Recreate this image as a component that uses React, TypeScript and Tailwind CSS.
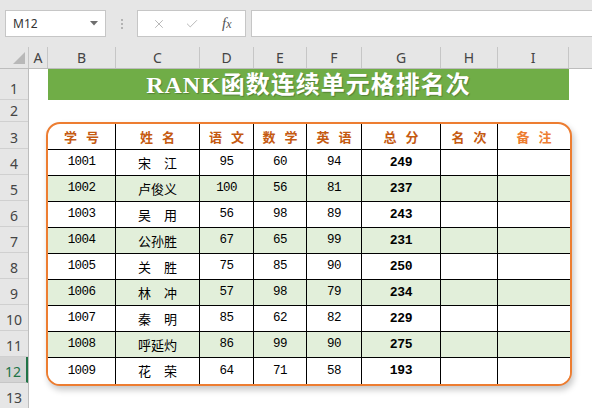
import { X, Check } from 'lucide-react'

const cols = [
  { key: 'A', w: 'w-[19px]' },
  { key: 'B', w: 'w-[68px]' },
  { key: 'C', w: 'w-[84px]' },
  { key: 'D', w: 'w-[54px]' },
  { key: 'E', w: 'w-[53px]' },
  { key: 'F', w: 'w-[55px]' },
  { key: 'G', w: 'w-[79px]' },
  { key: 'H', w: 'w-[57px]' },
  { key: 'I', w: 'w-[71px]' },
]

const rowHeads = [
  { n: 1, h: 'h-[31px]' },
  { n: 2, h: 'h-[22px]' },
  { n: 3, h: 'h-[27px]' },
  { n: 4, h: 'h-[26px]' },
  { n: 5, h: 'h-[26px]' },
  { n: 6, h: 'h-[26px]' },
  { n: 7, h: 'h-[26px]' },
  { n: 8, h: 'h-[26px]' },
  { n: 9, h: 'h-[26px]' },
  { n: 10, h: 'h-[26px]' },
  { n: 11, h: 'h-[26px]' },
  { n: 12, h: 'h-[26px]' },
  { n: 13, h: 'h-[26px]' },
]

const headers = [
  ['学', '号'],
  ['姓', '名'],
  ['语', '文'],
  ['数', '学'],
  ['英', '语'],
  ['总', '分'],
  ['名', '次'],
  ['备', '注'],
]

const students = [
  ['1001', '宋　江', 95, 60, 94, 249],
  ['1002', '卢俊义', 100, 56, 81, 237],
  ['1003', '吴　用', 56, 98, 89, 243],
  ['1004', '公孙胜', 67, 65, 99, 231],
  ['1005', '关　胜', 75, 85, 90, 250],
  ['1006', '林　冲', 57, 98, 79, 234],
  ['1007', '秦　明', 85, 62, 82, 229],
  ['1008', '呼延灼', 86, 99, 90, 275],
  ['1009', '花　荣', 64, 71, 58, 193],
]

const cell = 'flex items-center justify-center border-r border-black'
const num = "font-['Liberation_Mono',monospace] text-[12.5px] tracking-[-0.6px] text-black"
const cjk = "font-['Noto_Sans_CJK_SC',sans-serif]"

function Toolbar() {
  return (
    <div className="flex h-[47px] items-start bg-[#e6e6e6] pt-[10px] pl-[5px]">
      <div className="flex h-[27px] w-[101px] items-center justify-between border border-[#c6c6c6] bg-white pl-[7px] pr-[7px]">
        <span className="font-['Noto_Sans',sans-serif] text-[12px] text-[#333]">M12</span>
        <svg width="8" height="5" viewBox="0 0 8 5">
          <path d="M0 0 L8 0 L4 4.5 Z" fill="#6e6e6e" />
        </svg>
      </div>
      <div className="flex h-[27px] w-[31px] flex-col items-center justify-center gap-[2px]">
        <span className="h-[2px] w-[2px] bg-[#b3b3b3]" />
        <span className="h-[2px] w-[2px] bg-[#b3b3b3]" />
        <span className="h-[2px] w-[2px] bg-[#b3b3b3]" />
      </div>
      <div className="flex h-[27px] w-[109px] items-center border border-[#c6c6c6] bg-white">
        <X className="ml-[14px] h-[14px] w-[14px] text-[#a8a8a8]" strokeWidth={1.4} />
        <Check className="ml-[19px] h-[14px] w-[14px] text-[#a8a8a8]" strokeWidth={1.4} />
        <span className="ml-[23px] font-['Liberation_Serif',serif] text-[15px] italic text-[#555]">
          f<span className="text-[12px]">x</span>
        </span>
      </div>
      <div className="ml-[5px] h-[27px] flex-1 border border-r-0 border-[#c6c6c6] bg-white" />
    </div>
  )
}

function ColumnHeader() {
  return (
    <div className="flex h-[22px] border-b border-[#bdbdbd] bg-[#e6e6e6] font-['Noto_Sans',sans-serif] text-[14px] text-[#444]">
      <div className="flex w-[29px] items-end justify-end border-r border-[#c6c6c6] pb-[4px] pr-[3px]">
        <svg width="12" height="12" viewBox="0 0 12 12">
          <path d="M12 0 L12 12 L0 12 Z" fill="#b8b8b8" />
        </svg>
      </div>
      {cols.map((c) => (
        <div
          key={c.key}
          className={`${c.w} flex items-center justify-center border-r border-[#c6c6c6] leading-none`}
        >
          {c.key}
        </div>
      ))}
      <div className="flex-1" />
    </div>
  )
}

function RowHeaders() {
  return (
    <div className="flex w-[29px] flex-col border-r border-[#bdbdbd] bg-[#e6e6e6] font-['Noto_Sans',sans-serif] text-[14px]">
      {rowHeads.map((r) => (
        <div
          key={r.n}
          className={
            r.n === 12
              ? `${r.h} flex shrink-0 items-end justify-center border-b border-[#c6c6c6] border-r-2 border-r-[#217346] bg-[#d4d4d4] pb-[1px] leading-none text-[#217346]`
              : `${r.h} flex shrink-0 items-end justify-center border-b border-[#d0d0d0] pb-[1px] leading-none text-[#444]`
          }
        >
          <span className="pb-[2px]">{r.n}</span>
        </div>
      ))}
    </div>
  )
}

function ScoreTable() {
  return (
    <div className="ml-[17px] mt-[22px] w-[526px] overflow-hidden rounded-[14px] border-2 border-[#ed7d31] bg-white shadow-[2px_4px_6px_rgba(0,0,0,0.22)]">
      <div className="grid h-[26px] grid-cols-[68px_84px_54px_53px_55px_79px_57px_72px] border-b border-black">
        {headers.map((h, i) => (
          <div
            key={i}
            className={`${i === 7 ? 'flex items-center justify-center text-[#ed7d31]' : `${cell} text-[#c55a11]`} ${cjk} gap-[9px] text-[13px] font-bold`}
          >
            <span>{h[0]}</span>
            <span>{h[1]}</span>
          </div>
        ))}
      </div>
      {students.map((s, i) => (
        <div
          key={s[0]}
          className={`grid h-[26px] grid-cols-[68px_84px_54px_53px_55px_79px_57px_72px] ${i < students.length - 1 ? 'border-b border-black' : ''} ${i % 2 === 1 ? 'bg-[#e2efda]' : 'bg-white'}`}
        >
          <div className={`${cell} ${num}`}>{s[0]}</div>
          <div className={`${cell} ${cjk} text-[13px] text-black`}>{s[1]}</div>
          <div className={`${cell} ${num}`}>{s[2]}</div>
          <div className={`${cell} ${num}`}>{s[3]}</div>
          <div className={`${cell} ${num}`}>{s[4]}</div>
          <div className={`${cell} font-['Liberation_Mono',monospace] text-[13px] font-bold tracking-[-0.3px] text-black`}>{s[5]}</div>
          <div className={cell} />
          <div />
        </div>
      ))}
    </div>
  )
}

export default function App() {
  return (
    <div className="flex h-[408px] w-[592px] flex-col overflow-hidden bg-white">
      <Toolbar />
      <ColumnHeader />
      <div className="flex min-h-0 flex-1">
        <RowHeaders />
        <div className="flex-1 bg-white">
          <div className="ml-[19px] flex h-[31px] w-[521px] items-center justify-center bg-[#70ad47]">
            <span className="font-['Liberation_Serif','Noto_Sans_CJK_SC',serif] text-[24px] font-bold tracking-[1px] text-white [text-shadow:1px_1px_1px_rgba(0,0,0,0.25)]">
              RANK函数连续单元格排名次
            </span>
          </div>
          <ScoreTable />
        </div>
      </div>
    </div>
  )
}
